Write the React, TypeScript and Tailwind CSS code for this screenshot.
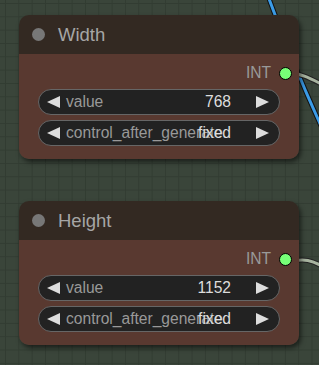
const font = { fontFamily: '"Liberation Sans", Arial, sans-serif' };

const Arrow = ({ dir }: { dir: "left" | "right" }) => (
  <svg width="13" height="12" viewBox="0 0 13 12" className="shrink-0">
    {dir === "left" ? (
      <polygon points="13,0 13,12 0,6" fill="#dddddd" />
    ) : (
      <polygon points="0,0 0,12 13,6" fill="#dddddd" />
    )}
  </svg>
);

const Widget = ({ label, value }: { label: string; value: string }) => (
  <div className="flex h-[26px] items-center rounded-full border border-[#666] bg-[#222] pl-[8px] pr-[10px] text-[15.6px] leading-none">
    <Arrow dir="left" />
    <span className="ml-[6px] min-w-0 flex-1 whitespace-nowrap text-[#999]">{label}</span>
    <span className="mr-[25px] shrink-0 whitespace-nowrap text-[#ddd]">{value}</span>
    <Arrow dir="right" />
  </div>
);

const Node = ({ title, value }: { title: string; value: string }) => (
  <div className="ml-[19px] w-[280px] rounded-[10px] shadow-[2px_3px_5px_rgba(0,0,0,0.55)]">
    <div className="flex h-[39px] items-center rounded-t-[10px] bg-[#332922] pl-[13px]">
      <div className="h-[13px] w-[13px] rounded-full bg-[#777]" />
      <span className="ml-[13px] text-[18.5px] text-[#a6a6a6]">{title}</span>
    </div>
    <div className="rounded-b-[10px] bg-[#593930] pb-[13px] pt-[10px]">
      <div className="flex h-[18px] items-center justify-end pr-[7px]">
        <span className="text-[15.6px] text-[#999]">INT</span>
        <div className="ml-[8px] h-[13px] w-[13px] rounded-full border border-black bg-[#77ff77]" />
      </div>
      <div className="mx-[19px] mt-[7px] flex flex-col gap-[5px]">
        <Widget label="value" value={value} />
        <Widget label="control_after_generate" value="fixed" />
      </div>
    </div>
  </div>
);

export default function App() {
  return (
    <div
      style={font}
      className="relative h-[365px] w-[319px] overflow-hidden bg-[#3a453a] bg-[linear-gradient(to_right,#323c32_1px,transparent_1px),linear-gradient(to_bottom,#323c32_1px,transparent_1px)] bg-[size:13.33px_13.33px] bg-[position:5px_3px]"
    >
      <svg className="absolute inset-0" width="319" height="365">
        <path d="M268 -4 C 284 40, 300 80, 322 128" stroke="#111" strokeWidth="5" fill="none" />
        <path d="M268 -4 C 284 40, 300 80, 322 128" stroke="#3b9be6" strokeWidth="3" fill="none" />
        <path d="M286 73 C 300 73, 308 77, 325 86" stroke="#222" strokeWidth="5" fill="none" />
        <path d="M286 73 C 300 73, 308 77, 325 86" stroke="#a7b39f" strokeWidth="3" fill="none" />
        <path d="M286 261 C 300 261, 306 256, 325 268" stroke="#222" strokeWidth="5" fill="none" />
        <path d="M286 261 C 300 261, 306 256, 325 268" stroke="#a7b39f" strokeWidth="3" fill="none" />
      </svg>
      <div className="relative flex flex-col pt-[15px]">
        <Node title="Width" value="768" />
        <div className="mt-[42px]">
          <Node title="Height" value="1152" />
        </div>
      </div>
    </div>
  );
}
